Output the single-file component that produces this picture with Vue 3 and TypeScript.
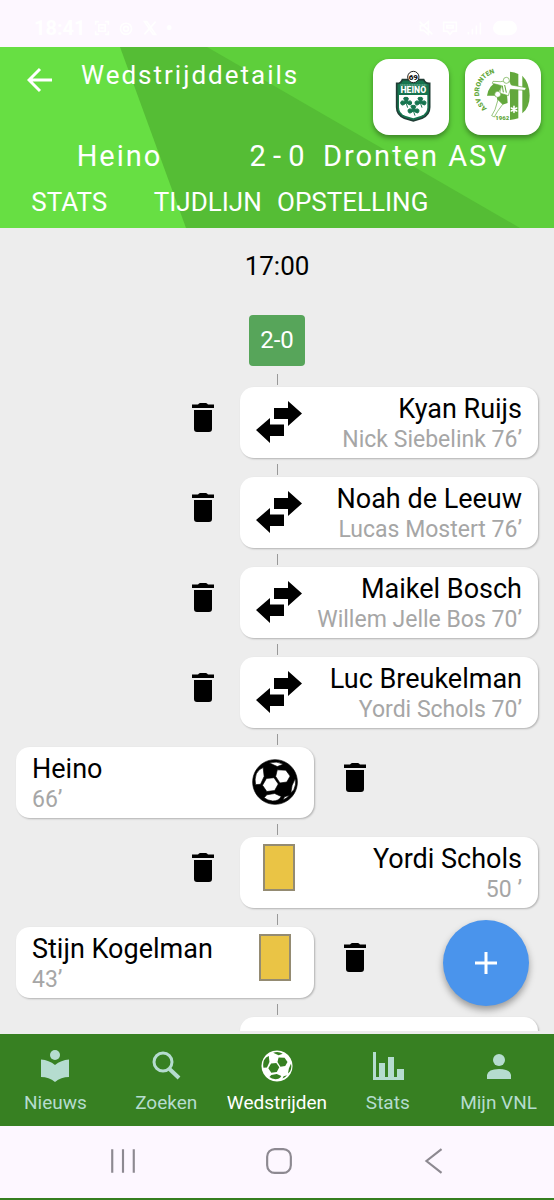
<script setup lang="ts">
import { ref } from 'vue'

type EventKind = 'sub' | 'goal' | 'yellow'

interface MatchEvent {
  side: 'home' | 'away'
  kind: EventKind
  title: string
  detail: string
}

const tabs: string[] = ['STATS', 'TIJDLIJN', 'OPSTELLING']
const activeTab = ref('TIJDLIJN')

const events = ref<MatchEvent[]>([
  { side: 'away', kind: 'sub', title: 'Kyan Ruijs', detail: 'Nick Siebelink 76’' },
  { side: 'away', kind: 'sub', title: 'Noah de Leeuw', detail: 'Lucas Mostert 76’' },
  { side: 'away', kind: 'sub', title: 'Maikel Bosch', detail: 'Willem Jelle Bos 70’' },
  { side: 'away', kind: 'sub', title: 'Luc Breukelman', detail: 'Yordi Schols 70’' },
  { side: 'home', kind: 'goal', title: 'Heino', detail: '66’' },
  { side: 'away', kind: 'yellow', title: 'Yordi Schols', detail: '50 ’' },
  { side: 'home', kind: 'yellow', title: 'Stijn Kogelman', detail: '43’' },
])

function removeEvent(index: number): void {
  events.value.splice(index, 1)
}

const ballPath =
  'M81 15a68 68 0 1 0 .1 0z' +
  'M64 25 Q88 18 106 29 L88 36z' +
  'M88 46 L114 47 L127 65 L117 83 L96 86 L83 66z' +
  'M55 72 L78 70 L91 89 L80 109 L56 112 L43 93z' +
  'M24 58 Q32 43 45 39 L48 66 L37 90 L22 91 Q18 74 24 58z' +
  'M133 94 L142 73 Q147 90 138 107 L129 116z' +
  'M56 122 L80 118 L100 127 Q92 141 74 141 Q57 139 48 131z' +
  'M110 128 L125 123 Q117 132 105 138z'
</script>

<template>
  <div class="app">
    <div class="status">
      <div class="status-group">
        <span class="clock">18:41</span>
        <svg class="status-icon" viewBox="0 0 20 20"><path d="M2 6V2h4M14 2h4v4M18 14v4h-4M6 18H2v-4M6 6h8v8H6zM8 10h4" /></svg>
        <svg class="status-icon" viewBox="0 0 20 20"><circle cx="10" cy="11" r="7" /><circle cx="10" cy="11" r="3" /></svg>
        <svg class="status-icon" viewBox="0 0 20 20"><path d="M3 2h3l11 16h-3zM17 2 3 18" /></svg>
        <span class="clock">•</span>
      </div>
      <div class="status-group">
        <svg class="status-icon" viewBox="0 0 20 20"><path d="M3 7h4l6-5v16l-6-5H3zM2 2l16 16" /></svg>
        <svg class="status-icon" viewBox="0 0 20 20"><path d="M2 3h16v11h-5l-3 4-3-4H2zM6 7h8v3H6z" /></svg>
        <svg class="status-icon" viewBox="0 0 20 20"><path d="M3 18v-3M8 18v-7M13 18V7M18 18V3" /></svg>
        <svg class="status-battery" viewBox="0 0 30 20"><rect x="1" y="2" width="28" height="16" rx="8" /></svg>
      </div>
    </div>

    <header class="header">
      <svg class="header-bg" viewBox="0 0 554 181" preserveAspectRatio="none" aria-hidden="true">
        <path fill="#67df43" d="M0 0H120L186 181H0z" />
        <path fill="#5ecf3b" d="M207 0H554V181H520z" />
      </svg>
      <div class="top-row">
        <button class="back" type="button" aria-label="Terug">
          <svg viewBox="0 0 26 26"><path d="M25 13H3M13 2 2 13l11 11" /></svg>
        </button>
        <h1 class="page-title">Wedstrijddetails</h1>
        <div class="crest">
          <svg viewBox="0 0 228 228" role="img" aria-label="Heino">
            <path d="M71 73Q84 74 88 62H152Q157 74 170 73V145Q170 168 147 178L121 186L94 178Q71 168 71 145z" fill="#16744f" stroke="#203d35" stroke-width="5" />
            <path d="M78 108H163V145Q163 163 145 170L121 178L96 170Q78 163 78 145z" fill="#fff" />
            <path d="M82 78H160" stroke="#8bc0ab" stroke-width="3" stroke-dasharray="4 1" />
            <text x="121" y="103" class="heino-name">HEINO</text>
            <circle cx="121" cy="54" r="17" fill="#fff" stroke="#222" stroke-width="3" />
            <text x="121" y="62" class="heino-year">69</text>
            <g id="clover-leaf" fill="#16744f" stroke="#16744f" stroke-width="3">
              <path d="M99 129q-14-15 0-14q13-1 2 14q15-8 15 3q-2 12-16-1q-14 14-17 1q0-11 16-3zM99 131l5 15" />
            </g>
            <use href="#clover-leaf" x="43" y="0" />
            <use href="#clover-leaf" x="22" y="24" />
          </svg>
        </div>
        <div class="crest">
          <svg viewBox="0 0 228 228" role="img" aria-label="Dronten ASV">
            <defs>
              <path id="arc-top" d="M66 148A59 59 0 0 1 138 53" />
            </defs>
            <text class="dronten-name"><textPath href="#arc-top">ASV DRONTEN</textPath></text>
            <g fill="#63a83c">
              <path d="M135 38Q149 39 160 45V178Q149 182 135 183z" />
              <path d="M172 50Q194 72 194 110Q194 145 172 163z" />
              <path d="M66 110Q70 80 96 68L110 82L96 110z" />
              <path d="M98 102L126 106L128 132L110 138L96 120z" />
            </g>
            <g fill="#fff" stroke="#63a83c" stroke-width="2">
              <path d="M106 68L132 64L139 78L184 86L180 94L136 91L130 110L104 102L110 80L82 73L84 67z" />
              <circle cx="124" cy="64" r="9" />
              <circle cx="98" cy="106" r="9" />
              <path d="M99 122L113 136L97 158L88 174L80 170L90 152z" />
            </g>
            <path d="M119 78L124 101M112 80L115 100" stroke="#63a83c" stroke-width="3" />
            <path d="M147 142v18M139 147l16 9M139 156l16-9" stroke="#fff" stroke-width="5" stroke-linecap="round" />
            <text x="112" y="183" class="dronten-year">1962</text>
          </svg>
        </div>
      </div>
      <div class="score-row">
        <span class="home-team">Heino</span>
        <span class="score">2 - 0</span>
        <span class="away-team">Dronten ASV</span>
      </div>
      <div class="tabs" role="tablist">
        <button
          v-for="tab in tabs"
          :key="tab"
          class="tab"
          type="button"
          role="tab"
          :aria-selected="activeTab === tab"
          @click="activeTab = tab"
        >{{ tab }}</button>
      </div>
    </header>

    <div class="body">
      <main class="timeline">
        <time class="kickoff">17:00</time>
        <div class="result">2-0</div>
        <template v-for="(event, index) in events" :key="event.title">
          <div class="connector"></div>
          <div class="event" :class="event.side">
            <article class="card">
              <div class="symbol">
                <svg v-if="event.kind === 'sub'" class="swap" viewBox="0 0 46 42" aria-label="Wissel">
                  <path d="M18 7H32V0L46 12.500L32 25V18H18z" />
                  <path d="M28 23.500H14V17L0 29L14 42V35H28z" />
                </svg>
                <svg v-else-if="event.kind === 'goal'" class="ball" viewBox="11 13 140 140" aria-label="Doelpunt">
                  <path fill-rule="evenodd" stroke="currentColor" stroke-width="2" :d="ballPath" />
                </svg>
                <div v-else class="yellow-card" role="img" aria-label="Gele kaart"></div>
              </div>
              <div class="text">
                <h2 class="title">{{ event.title }}</h2>
                <p class="detail">{{ event.detail }}</p>
              </div>
            </article>
            <button class="delete" type="button" aria-label="Verwijderen" @click="removeEvent(index)">
              <svg viewBox="0 0 22 29">
                <path d="M0 1.500H6Q7 0 8 0H14Q15 0 16 1.500H22V5H0zM2 7H20V26Q20 29 17 29H5Q2 29 2 26z" />
              </svg>
            </button>
          </div>
        </template>
        <div class="connector"></div>
        <div class="event away">
          <article class="card"></article>
        </div>
      </main>
      <button class="fab" type="button" aria-label="Toevoegen">
        <svg viewBox="0 0 22 22"><path d="M11 0V22M0 11H22" /></svg>
      </button>
    </div>

    <nav class="nav">
      <a class="nav-item" href="#nieuws">
        <svg viewBox="0 0 32 32"><circle cx="16" cy="5" r="5" /><path d="M2 9.500Q10 10 16 15Q22 10 30 9.500V27Q22 27 16 32Q10 27 2 27z" /></svg>
        <span>Nieuws</span>
      </a>
      <a class="nav-item" href="#zoeken">
        <svg viewBox="0 0 32 32"><path fill="none" stroke="currentColor" stroke-width="4" d="M19.500 19L29 28" /><circle cx="13" cy="12" r="9" fill="none" stroke="currentColor" stroke-width="3" /></svg>
        <span>Zoeken</span>
      </a>
      <a class="nav-item current" href="#wedstrijden">
        <svg viewBox="11 13 140 140"><path fill-rule="evenodd" :d="ballPath" /></svg>
        <span>Wedstrijden</span>
      </a>
      <a class="nav-item" href="#stats">
        <svg viewBox="0 0 32 32"><path d="M1 2H4V27H7V13H13V27H16V7H22V27H25V19H32V30H1z" /></svg>
        <span>Stats</span>
      </a>
      <a class="nav-item" href="#mijn-vnl">
        <svg viewBox="0 0 32 32"><circle cx="16" cy="10" r="6" /><path d="M4 29V25Q5 19 16 19Q27 19 28 25V29z" /></svg>
        <span>Mijn VNL</span>
      </a>
    </nav>

    <div class="system-bar">
      <button type="button" aria-label="Recente apps">
        <svg viewBox="0 0 26 26"><path d="M3 2V24M13 2V24M23 2V24" /></svg>
      </button>
      <button type="button" aria-label="Startscherm">
        <svg viewBox="0 0 26 26"><rect x="2" y="2" width="22" height="22" rx="7" /></svg>
      </button>
      <button type="button" aria-label="Vorige">
        <svg viewBox="0 0 26 26"><path d="M20 2 6 13 20 24" /></svg>
      </button>
    </div>
  </div>
</template>

<style>
body {
  background: #fdf7ff;
}
</style>

<style scoped>
.app {
  display: flex;
  flex-direction: column;
  height: 100vh;
  box-sizing: border-box;
  border-bottom: 2px solid #357e20;
  font-family: Roboto, "Liberation Sans", sans-serif;
  color: #000;
}

button {
  margin: 0;
  padding: 0;
  border: 0;
  background: none;
  font: inherit;
  color: inherit;
  cursor: pointer;
}

svg {
  display: block;
}

.status {
  display: flex;
  justify-content: space-between;
  align-items: center;
  flex: none;
  height: 47px;
  padding: 8px 34px 0;
  box-sizing: border-box;
  background: #fdf7ff;
  color: #fff;
}

.status-group {
  display: flex;
  align-items: center;
  gap: 8px;
}

.clock {
  font-size: 20px;
  line-height: 24px;
  font-weight: 700;
}

.status-icon,
.status-battery {
  width: 16px;
  height: 16px;
  fill: none;
  stroke: #fff;
  stroke-width: 2;
}

.status-battery {
  width: 30px;
  fill: #fff;
}

.header {
  position: relative;
  flex: none;
  background: #55bd35;
  color: #fff;
}

.header-bg {
  position: absolute;
  inset: 0;
  width: 100%;
  height: 100%;
}

.top-row,
.score-row,
.tabs {
  position: relative;
}

.top-row {
  display: flex;
  align-items: flex-start;
  gap: 16px;
  padding: 12px 13px 0 27px;
}

.back svg {
  width: 26px;
  height: 26px;
  margin-top: 8px;
  fill: none;
  stroke: #fff;
  stroke-width: 3;
}

.page-title {
  flex: 1;
  margin: 0 0 0 12px;
  font-size: 26px;
  line-height: 32px;
  font-weight: 400;
  letter-spacing: 2px;
}

.crest {
  width: 76px;
  height: 76px;
  border-radius: 16px;
  background: #fff;
  box-shadow: 0 3px 5px rgba(0, 0, 0, 0.35);
}

.crest svg {
  width: 100%;
  height: 100%;
}

.heino-name,
.heino-year,
.dronten-year {
  text-anchor: middle;
  font-weight: 900;
}

.heino-name {
  font-size: 26px;
  fill: #fff;
}

.heino-year {
  font-size: 24px;
  fill: #111;
}

.dronten-name {
  font-size: 20px;
  font-weight: 900;
  fill: #63a83c;
}

.dronten-year {
  font-size: 18px;
  fill: #63a83c;
}

.score-row {
  display: grid;
  grid-template-columns: 1fr 76px 1fr;
  padding-top: 2px;
  font-size: 29px;
  line-height: 38px;
  text-align: center;
  white-space: nowrap;
}

.home-team,
.away-team {
  letter-spacing: 2px;
}

.away-team {
  padding-left: 8px;
  text-align: left;
}

.tabs {
  display: grid;
  grid-template-columns: repeat(4, minmax(0, 1fr));
  justify-items: safe center;
  padding: 9px 0 8px;
}

.tab {
  font-size: 26px;
  line-height: 36px;
  white-space: nowrap;
}

.body {
  position: relative;
  flex: 1;
  min-height: 0;
  overflow: hidden;
  box-sizing: border-box;
  border-bottom: 3px solid #ededed;
  background: #ededed;
}

.timeline {
  display: flex;
  flex-direction: column;
  align-items: center;
  height: 100%;
  box-sizing: border-box;
  padding: 21px 16px 0;
  overflow: hidden;
}

.timeline > * {
  flex: none;
}

.kickoff {
  font-size: 26px;
  line-height: 34px;
}

.result {
  margin: 32px 0 2px;
  padding: 0 11px;
  border-radius: 4px;
  background: #57a55a;
  color: #fff;
  font-size: 24px;
  line-height: 51px;
}

.connector {
  width: 1px;
  height: 11px;
  margin: 6px 0 2px;
  background: #999;
}

.event {
  display: flex;
  align-items: flex-start;
  gap: 26px;
  width: 100%;
}

.event.home {
  gap: 30px;
}

.event.away {
  flex-direction: row-reverse;
}

.card {
  display: flex;
  justify-content: space-between;
  width: 57%;
  min-height: 71px;
  box-sizing: border-box;
  padding: 0 16px;
  border-radius: 14px;
  background: #fff;
  box-shadow: 1px 1px 2px rgba(0, 0, 0, 0.25);
}

.home .card {
  flex-direction: row-reverse;
}

.away .text {
  text-align: right;
}

.title,
.detail {
  margin: 0;
  font-weight: 400;
  white-space: nowrap;
}

.title {
  padding-top: 6px;
  font-size: 27px;
  line-height: 32px;
}

.detail {
  font-size: 23px;
  line-height: 30px;
  color: #a6a6a6;
}

.symbol {
  display: flex;
  justify-content: center;
  width: 46px;
}

.swap {
  width: 46px;
  height: 42px;
  margin-top: 14px;
}

.ball {
  width: 48px;
  height: 48px;
  margin-top: 11px;
}

.yellow-card {
  width: 32px;
  height: 47px;
  margin-top: 7px;
  box-sizing: border-box;
  border: 2px solid #948b72;
  background: #eac445;
}

.delete {
  padding: 16px 0 0;
}

.delete svg {
  width: 22px;
  height: 29px;
}

.fab {
  position: absolute;
  right: 25px;
  bottom: 25px;
  display: grid;
  place-items: center;
  width: 86px;
  height: 86px;
  border-radius: 50%;
  background: #4a94ec;
  box-shadow: 0 4px 7px rgba(0, 0, 0, 0.35);
}

.fab svg {
  width: 22px;
  height: 22px;
  stroke: #fff;
  stroke-width: 3;
}

.nav {
  display: grid;
  grid-template-columns: repeat(5, 1fr);
  flex: none;
  height: 92px;
  background: #378022;
}

.nav-item {
  display: flex;
  flex-direction: column;
  align-items: center;
  gap: 8px;
  padding-top: 16px;
  color: #b5dccf;
  font-size: 19px;
  line-height: 26px;
  text-decoration: none;
  white-space: nowrap;
}

.nav-item svg {
  width: 32px;
  height: 32px;
  fill: currentColor;
}

.nav-item.current {
  color: #fff;
}

.system-bar {
  display: flex;
  justify-content: space-between;
  align-items: center;
  flex: none;
  height: 72px;
  padding: 0 106px 2px 109px;
  box-sizing: border-box;
  background: #fdf7ff;
}

.system-bar svg {
  width: 28px;
  height: 28px;
  fill: none;
  stroke: #8d8991;
  stroke-width: 2;
}
</style>
